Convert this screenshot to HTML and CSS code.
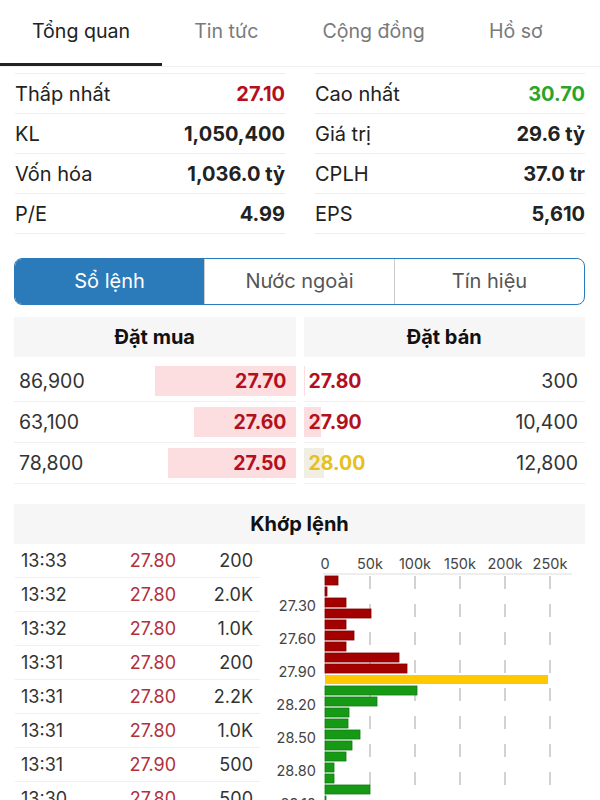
FILE: index.html
```html
<!DOCTYPE html>
<html lang="vi">
<head>
  <meta charset="UTF-8">
  <title>Tổng quan</title>
  <meta name="viewport" content="width=device-width, initial-scale=1">
  <link rel="stylesheet" href="styles.css">
</head>
<body>
  <div class="tabs">
    <div class="tab active">Tổng quan</div>
    <div class="tab">Tin tức</div>
    <div class="tab">Cộng đồng</div>
    <div class="tab">Hồ sơ</div>
  </div>

  <div class="stats">
    <div class="stat-col">
      <div class="stat-row"><span>Thấp nhất</span><b class="down">27.10</b></div>
      <div class="stat-row"><span>KL</span><b>1,050,400</b></div>
      <div class="stat-row"><span>Vốn hóa</span><b>1,036.0 tỷ</b></div>
      <div class="stat-row"><span>P/E</span><b>4.99</b></div>
    </div>
    <div class="stat-col">
      <div class="stat-row"><span>Cao nhất</span><b class="up">30.70</b></div>
      <div class="stat-row"><span>Giá trị</span><b>29.6 tỷ</b></div>
      <div class="stat-row"><span>CPLH</span><b>37.0 tr</b></div>
      <div class="stat-row"><span>EPS</span><b>5,610</b></div>
    </div>
  </div>

  <div class="segment">
    <div class="seg-item selected">Sổ lệnh</div>
    <div class="seg-item">Nước ngoài</div>
    <div class="seg-item">Tín hiệu</div>
  </div>

  <div class="book">
    <div class="book-col">
      <div class="book-head">Đặt mua</div>
      <div class="book-row bid" style="--w:141px"><span>86,900</span><b class="down">27.70</b></div>
      <div class="book-row bid" style="--w:102px"><span>63,100</span><b class="down">27.60</b></div>
      <div class="book-row bid" style="--w:128px"><span>78,800</span><b class="down">27.50</b></div>
    </div>
    <div class="book-col">
      <div class="book-head">Đặt bán</div>
      <div class="book-row ask" style="--w:1px"><b class="down">27.80</b><span>300</span></div>
      <div class="book-row ask" style="--w:17px"><b class="down">27.90</b><span>10,400</span></div>
      <div class="book-row ask ref" style="--w:20px"><b class="ref-text">28.00</b><span>12,800</span></div>
    </div>
  </div>

  <div class="match-head">Khớp lệnh</div>
  <div class="match-body">
    <div class="trades">
      <div class="trade"><span>13:33</span><span class="price">27.80</span><span class="vol">200</span></div>
      <div class="trade"><span>13:32</span><span class="price">27.80</span><span class="vol">2.0K</span></div>
      <div class="trade"><span>13:32</span><span class="price">27.80</span><span class="vol">1.0K</span></div>
      <div class="trade"><span>13:31</span><span class="price">27.80</span><span class="vol">200</span></div>
      <div class="trade"><span>13:31</span><span class="price">27.80</span><span class="vol">2.2K</span></div>
      <div class="trade"><span>13:31</span><span class="price">27.80</span><span class="vol">1.0K</span></div>
      <div class="trade"><span>13:31</span><span class="price">27.90</span><span class="vol">500</span></div>
      <div class="trade"><span>13:30</span><span class="price">27.80</span><span class="vol">500</span></div>
    </div>

    <svg class="chart" width="325" height="260" viewBox="0 0 325 260">
      <g class="axis-text" text-anchor="middle">
        <text x="65" y="25">0</text>
        <text x="110" y="25">50k</text>
        <text x="155" y="25">100k</text>
        <text x="200" y="25">150k</text>
        <text x="245" y="25">200k</text>
        <text x="290" y="25">250k</text>
      </g>
      <line x1="63" y1="30" x2="312" y2="30" class="axis-line"/>
      <g class="grid">
        <line x1="110" y1="32" x2="110" y2="260"/>
        <line x1="155" y1="32" x2="155" y2="260"/>
        <line x1="200" y1="32" x2="200" y2="260"/>
        <line x1="245" y1="32" x2="245" y2="260"/>
        <line x1="290" y1="32" x2="290" y2="260"/>
      </g>
      <line x1="65.5" y1="32" x2="65.5" y2="260" class="axis-line"/>
      <g class="bars-down">
        <rect x="65" y="32" width="13" height="9"/>
        <rect x="65" y="43" width="2" height="9"/>
        <rect x="65" y="54" width="21" height="9"/>
        <rect x="65" y="65" width="46" height="9"/>
        <rect x="65" y="76" width="21" height="9"/>
        <rect x="65" y="87" width="29" height="9"/>
        <rect x="65" y="98" width="21" height="9"/>
        <rect x="65" y="109" width="74" height="9"/>
        <rect x="65" y="120" width="82" height="9"/>
      </g>
      <rect class="bar-ref" x="65" y="131" width="223" height="9"/>
      <g class="bars-up">
        <rect x="65" y="142" width="92" height="9"/>
        <rect x="65" y="153" width="52" height="9"/>
        <rect x="65" y="164" width="24" height="9"/>
        <rect x="65" y="175" width="23" height="9"/>
        <rect x="65" y="186" width="35" height="9"/>
        <rect x="65" y="197" width="27" height="9"/>
        <rect x="65" y="208" width="21" height="9"/>
        <rect x="65" y="219" width="9" height="9"/>
        <rect x="65" y="230" width="9" height="9"/>
        <rect x="65" y="241" width="45" height="9"/>
        <rect x="65" y="252" width="1" height="9"/>
      </g>
      <g class="price-text" text-anchor="end">
        <text x="56" y="63">27.30</text>
        <text x="56" y="96">27.60</text>
        <text x="56" y="129">27.90</text>
        <text x="56" y="162">28.20</text>
        <text x="56" y="195">28.50</text>
        <text x="56" y="228">28.80</text>
        <text x="56" y="261">29.10</text>
      </g>
    </svg>
  </div>
</body>
</html>
```

FILE: styles.css
```css
body {
  margin: 0;
  background: #fff;
  color: #222;
  font-family: Inter, "Liberation Sans", sans-serif;
  overflow: hidden;
}

/* top tabs */
.tabs {
  display: flex;
  border-bottom: 1px solid #f0f0f0;
}
.tab {
  padding: 0 32px;
  height: 63px;
  line-height: 63px;
  font-size: 19.6px;
  color: #7a7a7a;
  border-bottom: 3px solid transparent;
}
.tab.active {
  color: #222;
  border-bottom-color: #222;
}

/* stats */
.stats {
  display: grid;
  grid-template-columns: 1fr 1fr;
  column-gap: 30px;
  padding: 0 15px;
  margin-top: 6px;
}
.stat-col {
  border-top: 1px solid #eee;
}
.stat-row {
  display: flex;
  justify-content: space-between;
  align-items: center;
  height: 39px;
  border-bottom: 1px solid #eee;
  font-size: 20px;
}
.stat-row b {
  font-weight: 700;
  color: #222;
}
.stat-row b.down, .down { color: #b3101d; }
.stat-row b.up { color: #2aa52a; }

/* segmented control */
.segment {
  display: flex;
  margin: 24px 15px 0 14px;
  border: 1.5px solid #2b7bbb;
  border-radius: 8px;
  overflow: hidden;
}
.seg-item {
  flex: 1;
  height: 45px;
  line-height: 45px;
  text-align: center;
  font-size: 20px;
  color: #555;
  border-left: 1px solid #ccc;
}
.seg-item:first-child { border-left: none; }
.seg-item.selected {
  background: #2b7bbb;
  color: #fff;
}

/* order book */
.book {
  display: grid;
  grid-template-columns: 1fr 1fr;
  column-gap: 8px;
  margin: 12px 15px 0 14px;
}
.book-head {
  height: 40px;
  line-height: 40px;
  text-align: center;
  background: #f6f6f6;
  font-weight: 700;
  font-size: 20px;
  color: #111;
  margin-bottom: 4px;
}
.book-row {
  display: flex;
  justify-content: space-between;
  align-items: center;
  height: 40px;
  border-bottom: 1px solid #f0f0f0;
  font-size: 19.5px;
  color: #333;
  background-repeat: no-repeat;
  background-size: var(--w) 30px;
}
.book-row b { font-weight: 700; }
.bid {
  padding: 0 9px 0 5px;
  background-image: linear-gradient(#fcdde0, #fcdde0);
  background-position: right center;
}
.ask {
  padding: 0 7px 0 5px;
  background-image: linear-gradient(#fcdde0, #fcdde0);
  background-position: left center;
}
.ask.ref {
  background-image: linear-gradient(#f1efe4, #f1efe4);
}
.ref-text { color: #e6c01c; }

/* matched orders */
.match-head {
  margin: 20px 15px 0 14px;
  height: 40px;
  line-height: 40px;
  text-align: center;
  background: #f6f6f6;
  font-weight: 700;
  font-size: 20px;
  color: #111;
}
.match-body {
  display: grid;
  grid-template-columns: 245px 1fr;
  margin-left: 15px;
}
.trade {
  display: grid;
  grid-template-columns: 95px 66px 1fr;
  align-items: center;
  height: 33px;
  border-bottom: 1px solid #f0f0f0;
  font-size: 18px;
  color: #333;
}
.trade span:first-child { padding-left: 6px; }
.trade .price {
  text-align: right;
  color: #b2303c;
}
.trade .vol {
  text-align: right;
  padding-right: 7px;
}

.chart {
  display: block;
  font-family: Inter, "Liberation Sans", sans-serif;
}
.axis-text text, .price-text text {
  font-size: 14.5px;
  fill: #444;
}
.price-text text { dominant-baseline: middle; }
.axis-line { stroke: #ddd; stroke-width: 1; }
.grid line {
  stroke: #c4c4c4;
  stroke-width: 1.5;
  stroke-dasharray: 13 15;
}
.bars-down rect { fill: #a30000; stroke: #7d0000; stroke-width: 0.8; }
.bars-up rect { fill: #169a16; stroke: #0f7a0f; stroke-width: 0.8; }
.bar-ref { fill: #ffc800; }
```
